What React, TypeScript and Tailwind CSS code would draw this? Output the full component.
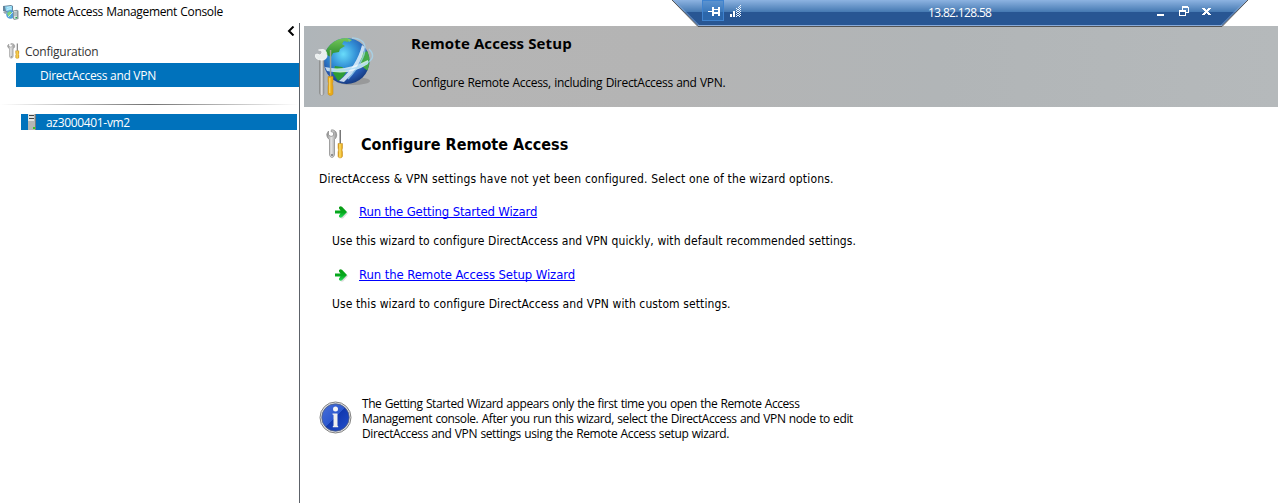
function ServerGlobeIcon() {
  return (
    <svg className="h-4 w-4 shrink-0" viewBox="0 0 16 16">
      <path d="M0 2l8-1 2 1v5l-7 1-3-1z" fill="#64849b" />
      <path d="M2 2.500l7-.5v4.500L3 7z" fill="#8ed8f5" />
      <path d="M4 3.500l4-1M4 5.500l4-1" stroke="#d4f3fd" strokeWidth=".7" />
      <path d="M0 8l3-.5L5 9l-3 1z" fill="#98a6b1" />
      <circle cx="7.500" cy="10.500" r="4.300" fill="#4e9ddd" />
      <path d="M4 9l3-2 2 2-2 2 1 2-3-1z" fill="#7fd47c" />
      <path d="M5 13l5-5" stroke="#d7effb" strokeWidth=".8" />
      <path d="M10 6.500l4-.8 1.500 1V15l-4 1-1.500-1z" fill="#8b999e" />
      <path d="M11 7l3 .3v7.700l-3-.2z" fill="#d4dfdf" />
      <path d="M11 9h3M11 11h3" stroke="#7f9199" strokeWidth=".8" />
      <path d="M12.500 13H14v1.500h-1.500z" fill="#27a84a" />
    </svg>
  );
}

function ToolsIcon({ className }: { className: string }) {
  return (
    <svg className={className} viewBox="0 0 18 30" preserveAspectRatio="none">
      <defs>
        <linearGradient id="steel">
          <stop stopColor="#8c8c8c" />
          <stop offset=".45" stopColor="#e4e4e4" />
          <stop offset="1" stopColor="#929292" />
        </linearGradient>
        <linearGradient id="handle">
          <stop stopColor="#cf8a08" />
          <stop offset=".4" stopColor="#ffe36a" />
          <stop offset="1" stopColor="#dc9606" />
        </linearGradient>
      </defs>
      <path
        d="M2.500 2L.8 5c0 3 1 4.500 2.700 5.500V25c0 4.500 5 4.500 5 0V10.500c2-1.500 2.500-4 2-6C10 2 8 .8 5.500.8L5 2.500l2.500 1v3L5 7.500 2.500 6z"
        fill="url(#steel)"
        stroke="#8f8f8f"
        strokeWidth=".8"
      />
      <circle cx="6" cy="26" r="1" fill="#777" />
      <path d="M13.500 1H15v14h-1.500z" fill="#777" />
      <path
        d="M12 14.500h4.500V19l-.5 2 .5 2v4c0 2.500-4.500 2.500-4.500 0v-4l.5-2-.5-2z"
        fill="url(#handle)"
        stroke="#c18a20"
        strokeWidth=".5"
      />
    </svg>
  );
}

function GlobeToolsIcon() {
  return (
    <svg className="h-16 w-[60px] shrink-0" viewBox="0 0 60 64">
      <defs>
        <radialGradient id="ocean" cx=".43" cy=".35" r=".65">
          <stop stopColor="#69dcfa" />
          <stop offset=".42" stopColor="#3493d8" />
          <stop offset=".8" stopColor="#2456ad" />
          <stop offset="1" stopColor="#173d84" />
        </radialGradient>
        <linearGradient id="land" x2="0" y2="1">
          <stop stopColor="#78c95b" />
          <stop offset="1" stopColor="#26892d" />
        </linearGradient>
        <linearGradient id="spanner">
          <stop stopColor="#858585" />
          <stop offset=".5" stopColor="#e5e5e5" />
          <stop offset="1" stopColor="#888" />
        </linearGradient>
        <clipPath id="sphere">
          <circle cx="31.500" cy="26" r="23" />
        </clipPath>
      </defs>
      <ellipse cx="38" cy="46" rx="17" ry="4" fill="#777" opacity=".45" />
      <circle cx="31.500" cy="26" r="23" fill="url(#ocean)" />
      <g clipPath="url(#sphere)">
        <path d="M10 19l2-9 8-6 9-2 5 2-1 3-4-1-2 3 3 2-5 3-1 3-6 1-2 4-4-2z" fill="url(#land)" />
        <path d="M47 18l8-3 2 9-4 12-4-3-3-4-1-4z" fill="#43aa47" />
        <path d="M20 31l7 1 5 4-4 6-5 4-5-8z" fill="#2e9d35" />
        <path d="M32 3l5 2-3 2z" fill="#79ca65" />
        <path d="M10 32q20 5 43-7v4Q35 41 12 36z" fill="#eaf8ff" opacity=".8" />
        <path d="M50 12Q46 32 29 47l-5-1Q42 31 47 10z" fill="#f0faff" opacity=".8" />
      </g>
      <path
        d="M37 3c8 0 13 4 13 10 0 10-8 21-17 31M54 14c5 5 5 10-2 14-8 5-24 9-39 7"
        fill="none"
        stroke="#a5d8f4"
        strokeWidth="1.500"
        opacity=".7"
      />
      <path
        d="M4.500 24.500v33c0 4 4.500 4 4.500 0v-33z"
        fill="url(#spanner)"
        stroke="#808080"
        strokeWidth=".4"
      />
      <path
        d="M3.500 15l3 .5L7 18l-2 2-3-1-2 1 1 3c2 2 4 2 7 2 2 0 4-2 4-4 0-4-2-7-5-6.500z"
        fill="#e9eeee"
        stroke="#fff"
        strokeWidth=".7"
      />
      <path d="M14.800 15h1.500v27h-1.500z" fill="#a5a293" />
      <path d="M13 41.500h5v5l-.5 2 .5 3v7c0 2.500-5 2.500-5 0v-7l.5-3-.5-2z" fill="#e9ab19" stroke="#bf8518" strokeWidth=".5" />
      <path d="M14.800 43v15" stroke="#ffe375" />
    </svg>
  );
}

function ServerIcon() {
  return (
    <svg className="h-4 w-2 shrink-0" viewBox="0 0 8 16">
      <path d="M0 0h8v16H0z" fill="#b5b7b4" />
      <path d="M0 0h6v7H0z" fill="#e2e3e1" />
      <path d="M1 1.500h5M1 4.500h5" stroke="#444" />
      <path d="M7.500 0v16" stroke="#777a7b" />
      <path d="M5 13h2v2H5z" fill="#39c922" />
    </svg>
  );
}

function GreenArrow() {
  return (
    <svg className="h-[13px] w-[13px] shrink-0" viewBox="0 0 13 13">
      <defs>
        <linearGradient id="arrowGreen" x2="0" y2="1">
          <stop stopColor="#0b9a14" />
          <stop offset=".55" stopColor="#05a91e" />
          <stop offset="1" stopColor="#28db5a" />
        </linearGradient>
      </defs>
      <path d="M1 8h6l-2 3 1 1.500h2L13 7l-1-1z" fill="#888" opacity=".3" />
      <path d="M0 4.500h5.500L4 2.500V1L5.500.3l1.500.4L12 6l-5 5.300-1.500.4L4 11V9.500l1.500-2H0z" fill="url(#arrowGreen)" />
    </svg>
  );
}

function InfoIcon() {
  return (
    <svg className="h-[33px] w-[33px] shrink-0" viewBox="0 0 33 33">
      <defs>
        <linearGradient id="infoBlue" x1="0" y1="0" x2="1" y2="1">
          <stop stopColor="#4a70d8" />
          <stop offset=".49" stopColor="#2c58cf" />
          <stop offset=".5" stopColor="#1239b0" />
          <stop offset="1" stopColor="#2450cc" />
        </linearGradient>
      </defs>
      <circle cx="16.500" cy="16.500" r="15.500" fill="#e6e6e6" stroke="#808080" />
      <circle cx="16.500" cy="16.500" r="13.700" fill="url(#infoBlue)" stroke="#55627f" strokeWidth=".8" />
      <circle cx="16.500" cy="8" r="2.500" fill="#f5f5f5" />
      <path d="M14 12.500h4.500v12.300l.7.400v1h-5.400v-1l.7-.4V14l-1-.5v-1z" fill="#eee" />
    </svg>
  );
}

function ConnectionBar() {
  return (
    <div className="absolute left-[672px] top-0 h-[27px] w-[577px]">
      <svg className="absolute inset-0 h-[27px] w-[577px]" viewBox="0 0 577 27">
        <defs>
          <linearGradient id="gloss" x2="0" y2="1">
            <stop stopColor="#8db3e1" />
            <stop offset="1" stopColor="#4579b2" />
          </linearGradient>
        </defs>
        <path d="M0 0h576l-26 26H26z" fill="#285693" />
        <path d="M0 0h576l-12 12H12z" fill="url(#gloss)" />
        <path d="M26 25.500h524" stroke="#8aabd8" />
        <path d="M0 0l26 26.500h524L576 0" fill="none" stroke="#555" />
        <path d="M1.500 0L27 25.500M549 25.500L574.500 0" stroke="#8aabd8" strokeWidth=".8" />
      </svg>
      <div className="relative flex h-[26px] items-start text-white">
        <div className="ml-[30px] h-[21px] w-[22px] border border-[#3f83cf] bg-[#2f78c4]/50">
          <svg className="h-[19px] w-5" viewBox="0 0 20 19" shapeRendering="crispEdges">
            <path d="M5 10h4v1H5zM9 6h2v9H9zM11 8h4v1h-4zM11 11h4v2h-4zM15 6h2v9h-2z" fill="white" />
          </svg>
        </div>
        <svg className="ml-1.5 mt-[5px] h-3 w-[11px]" viewBox="0 0 11 12" shapeRendering="crispEdges">
          <path d="M0 9h2v3H0zM3 6h2v6H3z" fill="white" />
          <path d="M6.500 3v9M8.500 2v10M10.500 0v12" stroke="#eef6ff" strokeDasharray="1 1" />
          <path d="M7.500 4v8M9.500 1v11" stroke="#eef6ff" strokeDasharray="1 1" />
        </svg>
        <span className="ml-[187px] mt-[5px] w-[70px] whitespace-nowrap text-xs leading-4 tracking-[-0.66px]">
          13.82.128.58
        </span>
        <svg className="ml-[158px] mt-[5px] h-[13px] w-[56px]" viewBox="0 0 56 13" shapeRendering="crispEdges">
          <path d="M1 9h7v2H1z" fill="white" />
          <path d="M23 5.500h6v5h-6zM26 5V2.500h6v5h-2" fill="none" stroke="white" />
          <path d="M23 6h6M26 2h6" stroke="white" strokeWidth="2" />
          <path d="M46 3h3l1.500 2L52 3h3l-3 3.500 3 3.500h-3l-1.500-2L49 10h-3l3-3.500z" fill="white" />
        </svg>
      </div>
    </div>
  );
}

function Sidebar() {
  return (
    <aside className="h-[480px] w-[300px] shrink-0 border-r border-[#5d6269]">
      <div className="flex h-4 justify-end pr-[4px] pt-[3px]">
        <svg className="h-[10px] w-2" viewBox="0 0 8 10">
          <path d="M6.500 .5L2 5l4.500 4.500" fill="none" stroke="#000" strokeWidth="2" />
        </svg>
      </div>
      <div className="flex h-6 items-center pl-[7px] text-xs text-[#333]">
        <ToolsIcon className="h-4 w-[13px] shrink-0" />
        <span className="ml-[5px] mt-[2px] whitespace-nowrap tracking-[-0.24px]">Configuration</span>
      </div>
      <div className="ml-4 flex h-6 items-center bg-[#0072bc] pl-6 text-xs text-white">
        <span className="mt-[2px] whitespace-nowrap tracking-[-0.29px]">DirectAccess and VPN</span>
      </div>
      <div className="mt-[17px] h-px bg-[linear-gradient(90deg,#fff,#727272_50%,#fff)]" />
      <div className="ml-[21px] mr-[2px] mt-[9px] flex h-4 items-center bg-[#0072bc] pl-[7px] text-xs text-white">
        <ServerIcon />
        <span className="ml-[10px] mt-px whitespace-nowrap leading-4 tracking-[-0.33px]">az3000401-vm2</span>
      </div>
    </aside>
  );
}

function WizardLink({ label, className }: { label: string; className: string }) {
  return (
    <div className="flex h-4 items-center pl-[16px]">
      <GreenArrow />
      <a
        href="#"
        className={`ml-[11px] whitespace-nowrap text-[13px] leading-4 text-[#0000ff] underline decoration-1 underline-offset-[1px] [text-decoration-skip-ink:none] ${className}`}
      >
        {label}
      </a>
    </div>
  );
}

export default function App() {
  return (
    <div className="relative flex h-[503px] w-[1278px] flex-col overflow-hidden bg-white font-['Open_Sans','Noto_Sans',sans-serif] text-black">
      <header className="flex h-[23px] shrink-0 items-center pl-[3px]">
        <ServerGlobeIcon />
        <h1 className="ml-1 whitespace-nowrap text-xs leading-4 tracking-[-0.34px] [word-spacing:0.5px]">
          Remote Access Management Console
        </h1>
      </header>
      <div className="flex">
        <Sidebar />
        <main className="ml-1 mt-[3px] flex-1">
          <section className="flex h-[81px] bg-[linear-gradient(90deg,#afb5b9,#b5b5b5_12%,#b4b4b4_35%,#b1b5b7_65%,#b5b9bb)] pl-[11px] pt-[9px]">
            <GlobeToolsIcon />
            <div className="ml-9">
              <h2 className="-mt-px whitespace-nowrap text-[15px] font-bold leading-[18px] tracking-[0.12px]">
                Remote Access Setup
              </h2>
              <p className="ml-px mt-[23px] whitespace-nowrap text-xs leading-4 tracking-[-0.29px] [word-spacing:0.5px]">
                Configure Remote Access, including DirectAccess and VPN.
              </p>
            </div>
          </section>
          <section className="pl-[15px] pt-[21px] font-['DejaVu_Sans_Condensed','DejaVu_Sans',sans-serif] text-xs">
            <div className="flex h-8 items-center pl-[7px]">
              <ToolsIcon className="h-[30px] w-[18px] shrink-0" />
              <h3 className="ml-[17px] mt-[2px] whitespace-nowrap text-base font-bold tracking-[0.02px]">
                Configure Remote Access
              </h3>
            </div>
            <p className="mt-[11px] whitespace-nowrap leading-4 tracking-[0.16px]">
              DirectAccess &amp; VPN settings have not yet been configured. Select one of the wizard options.
            </p>
            <div className="pt-[17px]">
              <WizardLink label="Run the Getting Started Wizard" className="tracking-[-0.16px]" />
            </div>
            <p className="ml-[13px] mt-[13px] whitespace-nowrap leading-4 tracking-[0.08px]">
              Use this wizard to configure DirectAccess and VPN quickly, with default recommended settings.
            </p>
            <div className="pt-[18px]">
              <WizardLink label="Run the Remote Access Setup Wizard" className="tracking-[-0.09px]" />
            </div>
            <p className="ml-[13px] mt-[13px] whitespace-nowrap leading-4 tracking-[0.1px]">
              Use this wizard to configure DirectAccess and VPN with custom settings.
            </p>
            <div className="mt-[89px] flex items-start font-['Open_Sans','Noto_Sans',sans-serif]">
              <InfoIcon />
              <div className="-mt-[5px] ml-[10px] whitespace-nowrap leading-[15px] [word-spacing:0.6px]">
                <p className="tracking-[-0.43px]">
                  The Getting Started Wizard appears only the first time you open the Remote Access
                </p>
                <p className="tracking-[-0.41px]">
                  Management console. After you run this wizard, select the DirectAccess and VPN node to edit
                </p>
                <p className="tracking-[-0.39px]">
                  DirectAccess and VPN settings using the Remote Access setup wizard.
                </p>
              </div>
            </div>
          </section>
        </main>
      </div>
      <ConnectionBar />
    </div>
  );
}
